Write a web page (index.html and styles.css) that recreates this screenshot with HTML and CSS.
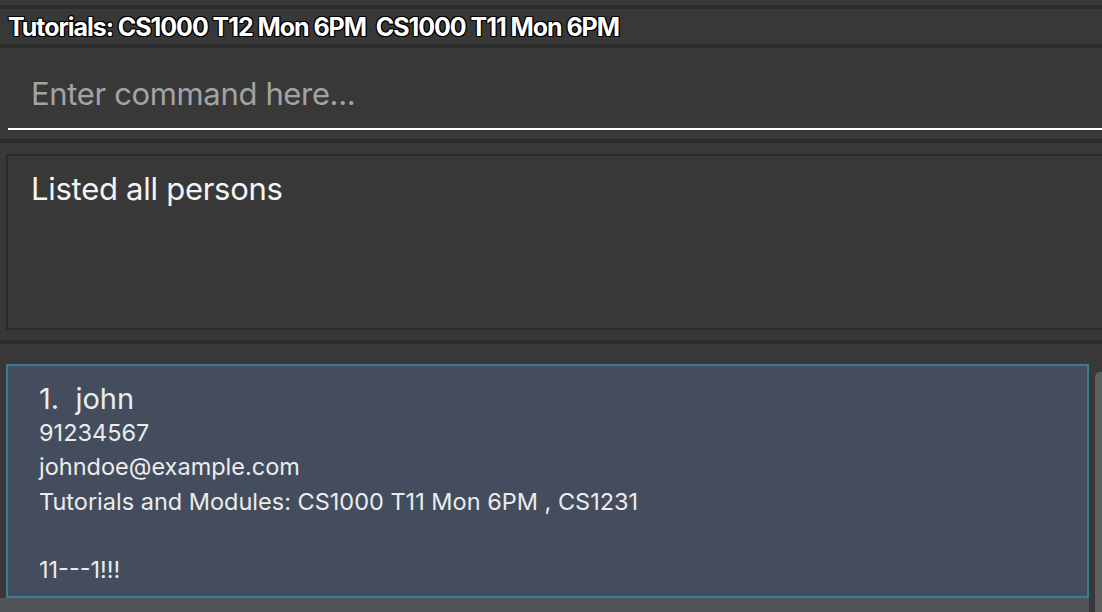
FILE: index.html
```html
<!DOCTYPE html>
<html>
<head>
<meta charset="utf-8">
<link rel="stylesheet" href="styles.css">
</head>
<body>
<div class="app">
  <div class="sep"></div>
  <div class="tutbar"><span class="tuttext">Tutorials: CS1000 T12 Mon 6PM &nbsp;CS1000 T11 Mon 6PM</span></div>
  <div class="sep"></div>
  <div class="cmd">
    <div class="cmd-field"><span class="placeholder">Enter command here...</span></div>
  </div>
  <div class="sep"></div>
  <div class="result-wrap">
    <div class="result"><div class="result-text">Listed all persons</div></div>
  </div>
  <div class="sep"></div>
  <div class="list-wrap">
    <div class="list">
      <div class="card">
        <div class="name">1.&nbsp; john</div>
        <div class="line">91234567</div>
        <div class="line">johndoe@example.com</div>
        <div class="line">Tutorials and Modules: CS1000 T11 Mon 6PM , CS1231</div>
        <div class="line"></div>
        <div class="line">11---1!!!</div>
      </div>
      <div class="nextcell"></div>
    </div>
    <div class="scrollbar"><div class="thumb"></div></div>
  </div>
</div>
</body>
</html>
```
FILE: styles.css
```css
html, body {
  margin: 0;
  padding: 0;
  background: #383838;
  overflow: hidden;
}
.app {
  width: 1102px;
  height: 612px;
  display: flex;
  flex-direction: column;
  padding-top: 5px;
  box-sizing: border-box;
  font-family: Inter, "Noto Sans", sans-serif;
}
.sep {
  height: 4px;
  background: #2b2b2b;
  flex: none;
}
.tutbar {
  height: 35px;
  display: flex;
  align-items: center;
  padding-left: 8px;
  flex: none;
}
.tuttext {
  font-weight: 700;
  font-size: 25px;
  letter-spacing: -1.05px;
  color: #fff;
  white-space: pre;
  text-shadow: 1px 0 0 #000, -1px 0 0 #000, 0 1px 0 #000, 0 -1px 0 #000,
    1px 1px 0 #000, -1px -1px 0 #000, 1px -1px 0 #000, -1px 1px 0 #000;
}
.cmd {
  height: 91px;
  padding-left: 8px;
  flex: none;
  box-sizing: border-box;
}
.cmd-field {
  height: 82px;
  border-bottom: 2px solid #ffffff;
  padding-left: 23px;
  display: flex;
  align-items: center;
  padding-top: 10px;
  box-sizing: border-box;
}
.placeholder {
  font-size: 31px;
  color: #a3a3a3;
  letter-spacing: -0.35px;
}
.result-wrap {
  height: 197px;
  padding: 11px 0 10px 6px;
  box-sizing: border-box;
  flex: none;
}
.result {
  height: 176px;
  border: 2px solid #2b2b2b;
  border-right: none;
  box-sizing: border-box;
  padding: 14px 0 0 23px;
}
.result-text {
  font-size: 31px;
  color: #f4f4f4;
  letter-spacing: -0.27px;
  line-height: 38px;
}
.list-wrap {
  flex: 1;
  display: flex;
  padding-top: 20px;
}
.list {
  width: 1089px;
  display: flex;
  flex-direction: column;
}
.card {
  margin-left: 6px;
  height: 234px;
  background: #434d5e;
  border: 2px solid #3a7d92;
  box-sizing: border-box;
  padding: 16px 0 0 31px;
  color: #ececec;
  flex: none;
}
.name {
  font-size: 29px;
  line-height: 34px;
  letter-spacing: 0;
}
.line {
  font-size: 23.5px;
  line-height: 34.3px;
  height: 34.3px;
  letter-spacing: 0;
}
.nextcell {
  flex: 1;
  background: #505357;
}
.scrollbar {
  width: 13px;
  display: flex;
  padding-left: 6px;
  padding-top: 8px;
  box-sizing: border-box;
}
.thumb {
  flex: 1;
  background: #5e5e5e;
  border-top-left-radius: 5px;
}
```
